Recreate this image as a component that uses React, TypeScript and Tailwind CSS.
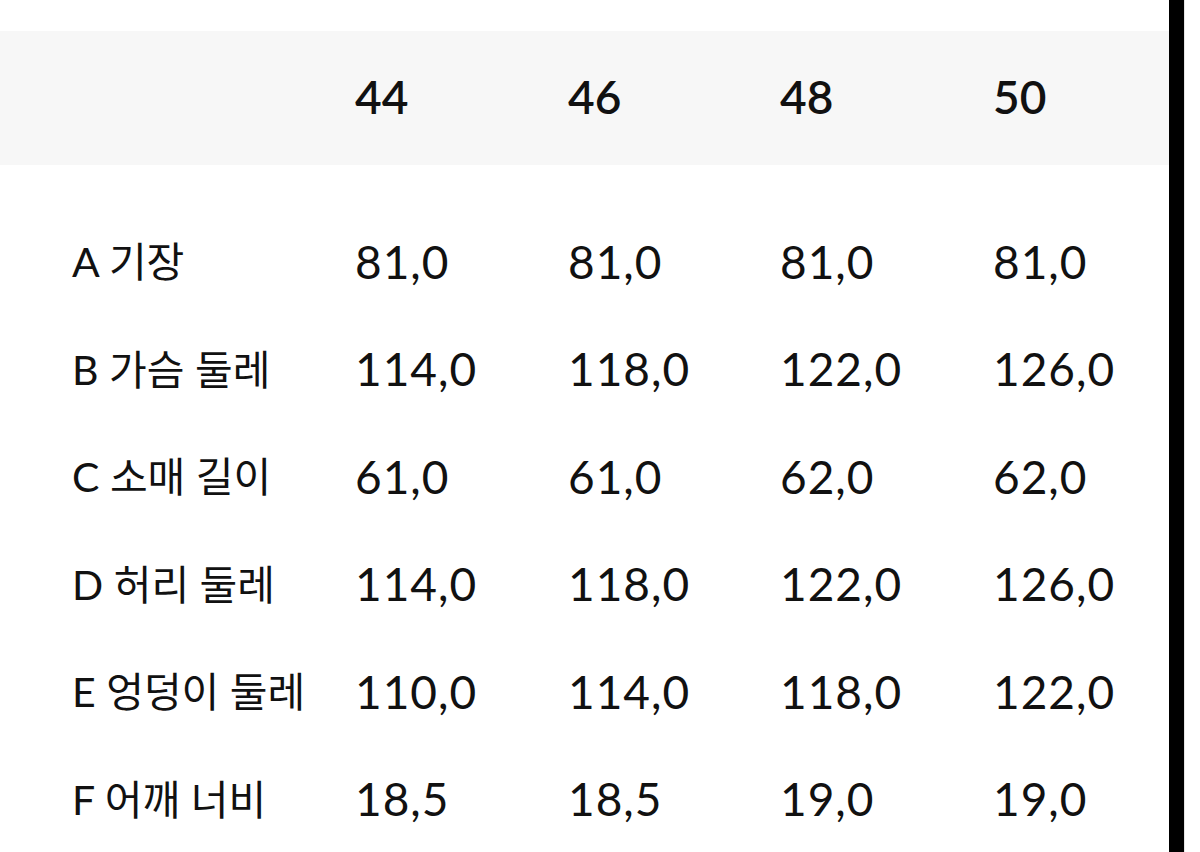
const sizes = ['44', '46', '48', '50'];

const rows = [
  { label: 'A 기장', values: ['81,0', '81,0', '81,0', '81,0'] },
  { label: 'B 가슴 둘레', values: ['114,0', '118,0', '122,0', '126,0'] },
  { label: 'C 소매 길이', values: ['61,0', '61,0', '62,0', '62,0'] },
  { label: 'D 허리 둘레', values: ['114,0', '118,0', '122,0', '126,0'] },
  { label: 'E 엉덩이 둘레', values: ['110,0', '114,0', '118,0', '122,0'] },
  { label: 'F 어깨 너비', values: ['18,5', '18,5', '19,0', '19,0'] },
];

const cols = 'grid grid-cols-[285px_213px_212px_213px_1fr] pl-[70px]';

const App = () => {
  return (
    <div className="flex w-[1200px] h-[852px] overflow-hidden bg-white text-[#111] font-['Lato','Noto_Sans_CJK_KR',sans-serif]">
      <div className="w-[1169px] pt-[31px]">
        {/* size header */}
        <div className={`${cols} h-[134px] items-center bg-[#f7f7f7]`}>
          <div />
          {sizes.map((s) => (
            <div key={s} className="text-[46px] leading-none font-semibold pb-[2px]">
              {s}
            </div>
          ))}
        </div>

        {/* measurements */}
        <div className="pt-[43px]">
          {rows.map((row) => (
            <div key={row.label} className={`${cols} h-[107.5px] items-center`}>
              <div className="text-[41px] leading-none whitespace-nowrap pl-[2px]">{row.label}</div>
              {row.values.map((v, i) => (
                <div key={i} className="text-[46px] leading-none tracking-[1px]">
                  {v}
                </div>
              ))}
            </div>
          ))}
        </div>
      </div>
      <div className="w-[15px] h-full bg-black" />
      <div className="flex-1 h-full bg-white border-l border-[#e5e5e5]" />
    </div>
  );
};

export default App;
